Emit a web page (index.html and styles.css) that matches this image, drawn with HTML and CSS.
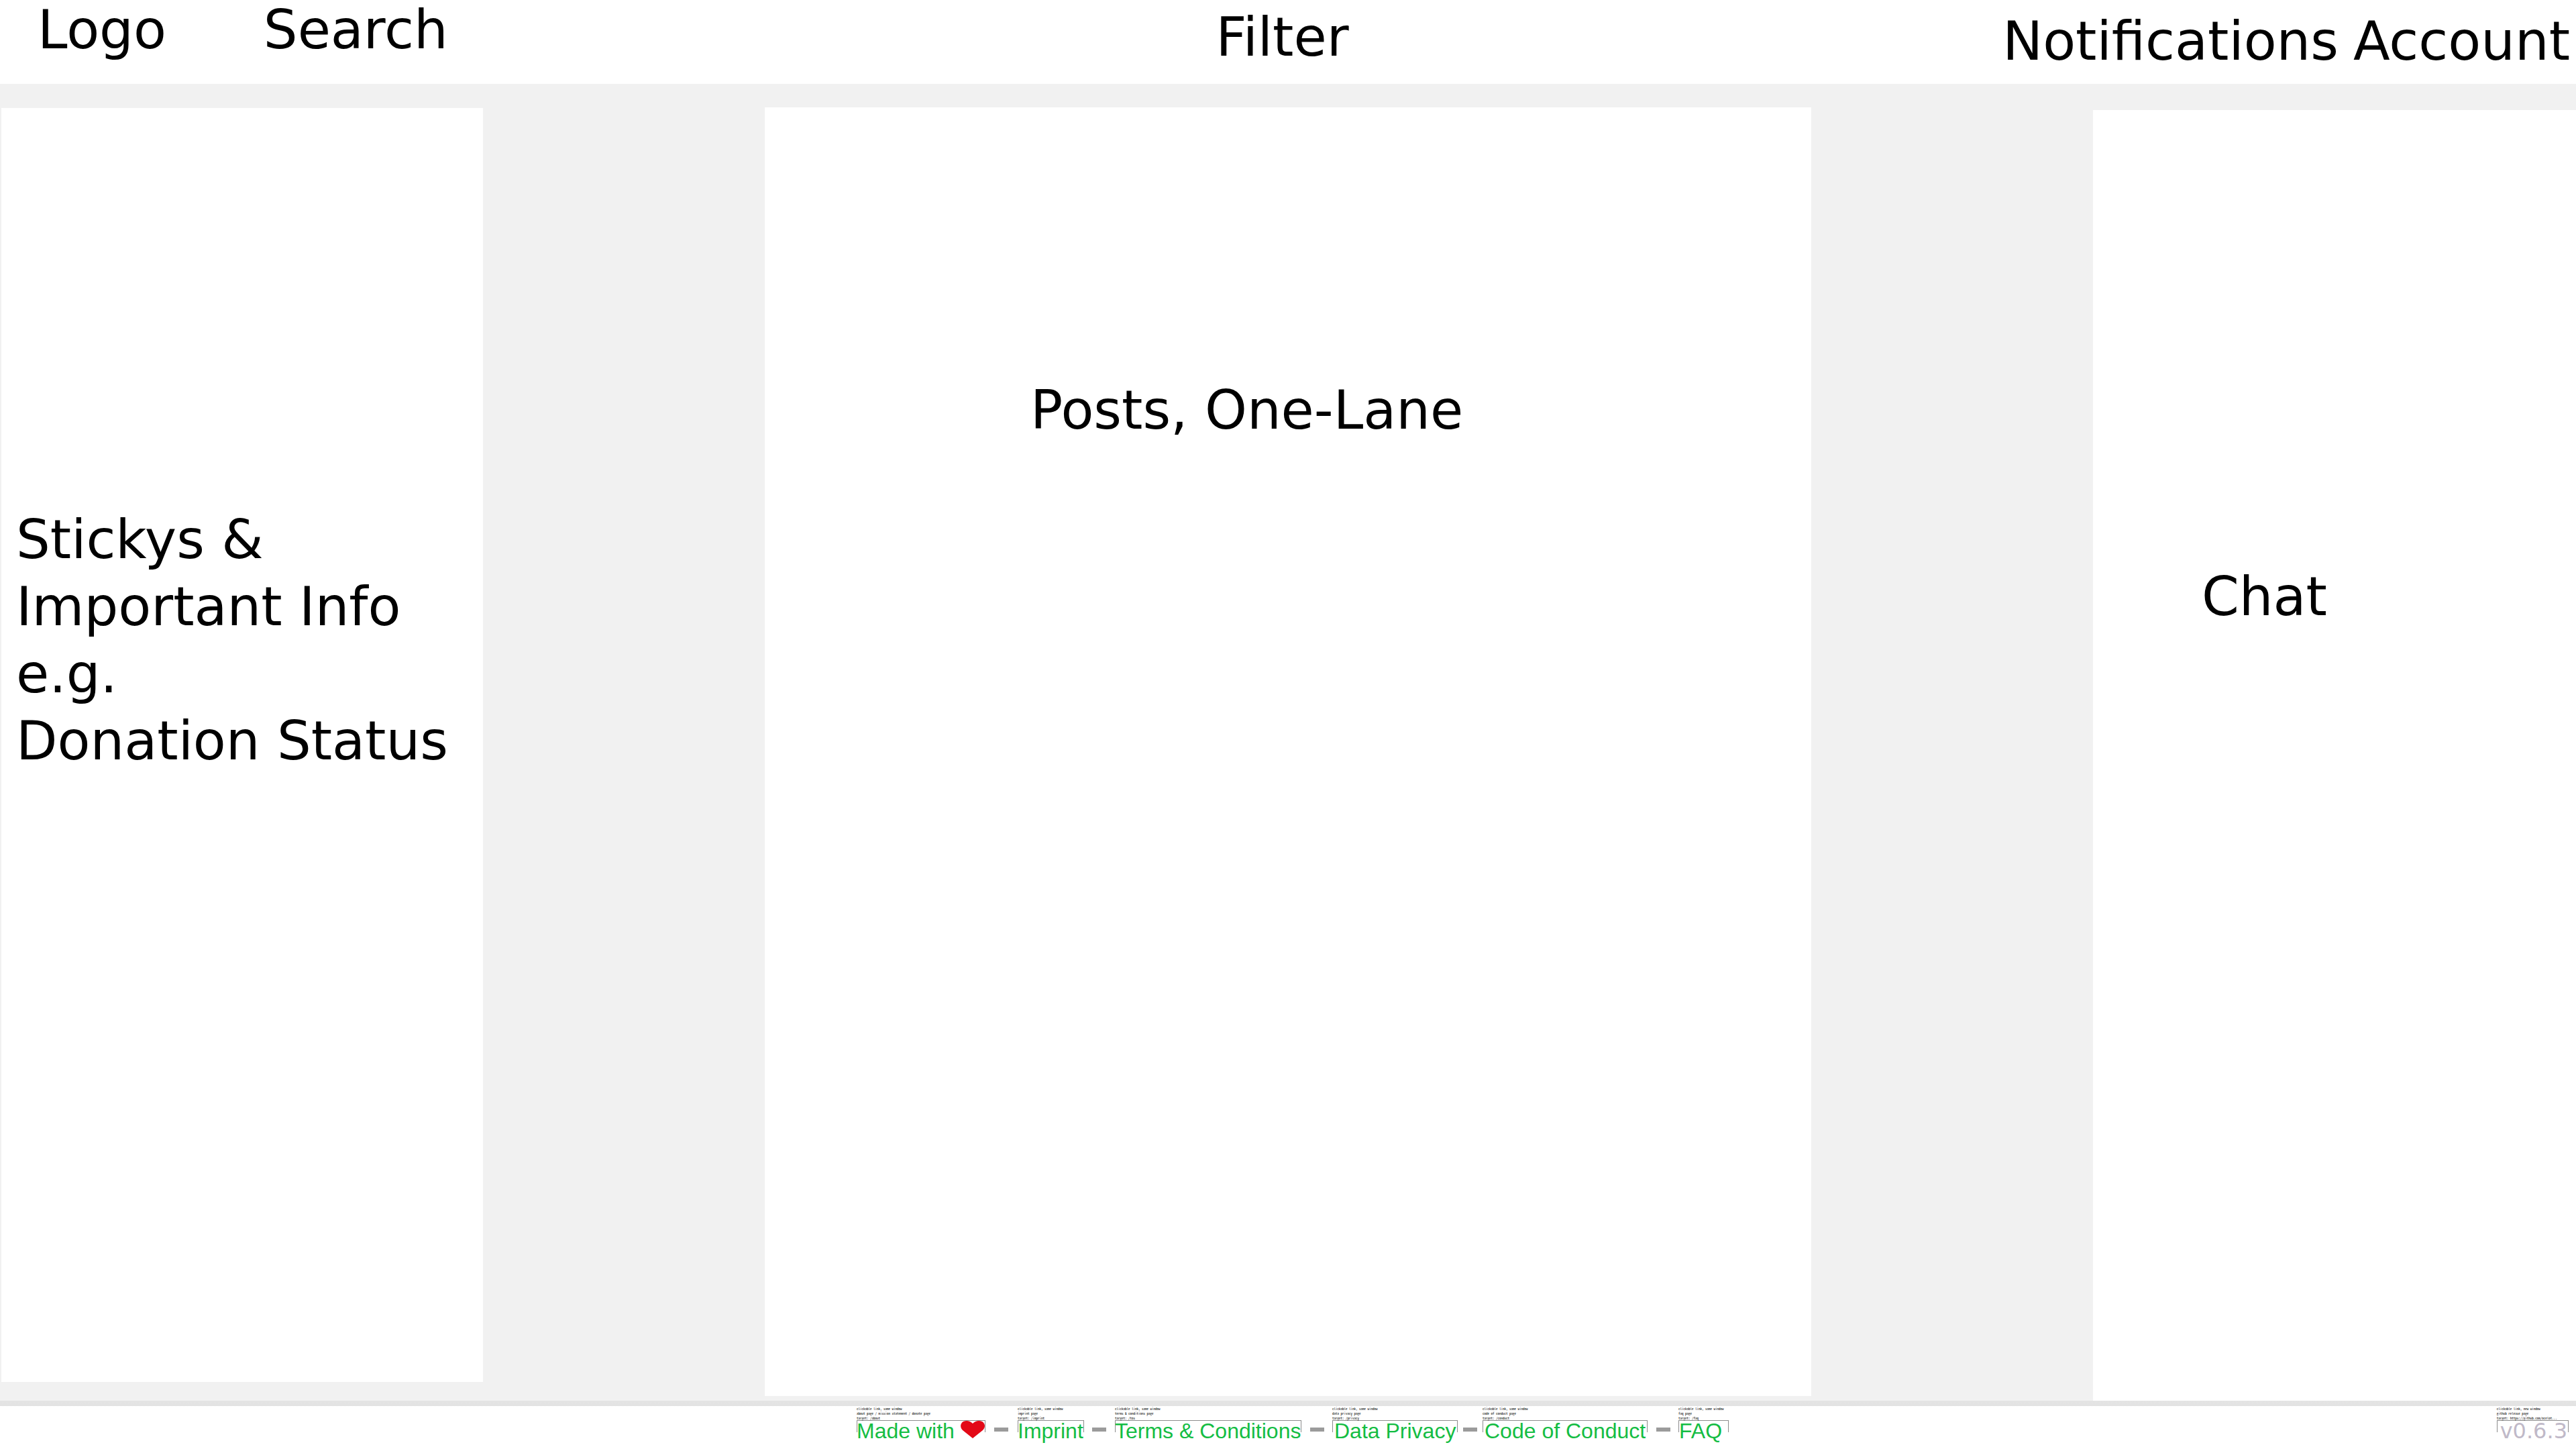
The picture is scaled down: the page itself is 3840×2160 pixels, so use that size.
FILE: index.html
```html
<!DOCTYPE html>
<html lang="en">
<head>
<meta charset="utf-8">
<title>One-Lane Layout</title>
<link rel="stylesheet" href="styles.css">
</head>
<body class="page">
  <header class="header">
    <div class="header-left">
      <span>Logo</span>
      <span>Search</span>
    </div>
    <div class="header-center">Filter</div>
    <div class="header-right">
      <span>Notifications</span>
      <span>Account</span>
    </div>
  </header>

  <main class="lanes">
    <aside class="panel panel-info">Stickys &amp;<br>Important Info<br>e.g.<br>Donation Status</aside>
    <section class="panel panel-posts">Posts, One-Lane</section>
    <aside class="panel panel-chat">Chat</aside>
  </main>

  <footer class="footer">
    <nav class="links">
      <div class="item">
        <p class="note">clickable link, same window<br>about page / mission statement / donate page<br>target: /about</p>
        <div class="row"><a class="link" href="/about">Made with <svg class="heart" viewBox="0 0 36 26" aria-hidden="true"><path d="M18 26 L3 14 C-1 10 -1 4 4 1 C9 -1 14 0 18 4 C22 0 27 -1 32 1 C37 4 37 10 33 14 Z"/></svg></a><span class="dash"></span></div>
      </div>
      <div class="item">
        <p class="note">clickable link, same window<br>imprint page<br>target: /imprint</p>
        <div class="row"><a class="link" href="/imprint">Imprint</a><span class="dash"></span></div>
      </div>
      <div class="item">
        <p class="note">clickable link, same window<br>terms &amp; conditions page<br>target: /tos</p>
        <div class="row"><a class="link" href="/tos">Terms &amp; Conditions</a><span class="dash"></span></div>
      </div>
      <div class="item">
        <p class="note">clickable link, same window<br>data privacy page<br>target: /privacy</p>
        <div class="row"><a class="link link-padded" href="/privacy">Data Privacy</a><span class="dash"></span></div>
      </div>
      <div class="item">
        <p class="note">clickable link, same window<br>code of conduct page<br>target: /conduct</p>
        <div class="row"><a class="link link-padded" href="/conduct">Code of Conduct</a><span class="dash"></span></div>
      </div>
      <div class="item">
        <p class="note">clickable link, same window<br>faq page<br>target: /faq</p>
        <div class="row"><a class="link link-last" href="/faq">FAQ</a></div>
      </div>
    </nav>
    <div class="release">
      <p class="note">clickable link, new window<br>github release page<br>target: https://github.com/ocelot...</p>
      <div class="row"><a class="link link-version" href="https://github.com/" target="_blank">v0.6.3</a></div>
    </div>
  </footer>
</body>
</html>
```
FILE: styles.css
```css
* {
  box-sizing: border-box;
}

.page {
  margin: 0;
  min-height: 100vh;
  display: flex;
  flex-direction: column;
  background: #f1f1f1;
  color: #000;
  font-family: "DejaVu Sans", sans-serif;
  font-size: 80px;
  line-height: 100px;
}

.header {
  display: grid;
  grid-template-columns: 1fr auto 1fr;
  min-height: 125px;
  padding: 0 9px 0 56px;
  background: #fff;
  line-height: 80px;
}

.header-left {
  display: flex;
  gap: 145px;
  padding-top: 5px;
}

.header-center {
  padding: 16px 64px 0 0;
}

.header-right {
  display: flex;
  justify-content: flex-end;
  gap: 22px;
  padding-top: 22px;
}

.lanes {
  flex: 1;
  display: grid;
  grid-template-columns: 18.75% 40.625% 18.75%;
  justify-content: space-between;
}

.panel {
  background: #fff;
}

.panel-info {
  margin: 36px 0 28px 2px;
  padding: 594px 0 0 22px;
}

.panel-posts {
  margin: 35px 0 7px;
  padding: 402px 0 0 396px;
}

.panel-chat {
  margin-top: 39px;
  padding: 676px 0 0 162px;
}

.footer {
  display: grid;
  grid-template-columns: 1fr auto 1fr;
  padding: 0 11px 11px 25px;
  border-top: 8px solid #dcdcdc;
  border-image: linear-gradient(#e4e4e4, #d6d6d6) 8;
  border-image-width: 8px 0 0;
  background: #fff;
}

.links {
  grid-column: 2;
  display: grid;
  grid-template-columns: 240px 145px 324px 224px 292px 75px;
}

.release {
  justify-self: end;
}

.note {
  margin: 0;
  color: #000;
  font-family: "Noto Sans Mono CJK SC", "Noto Sans Mono CJK JP", "DejaVu Sans Mono", monospace;
  font-size: 5px;
  line-height: 7px;
  white-space: nowrap;
}

.row {
  display: flex;
}

.link {
  position: relative;
  color: #14bd43;
  font-family: "Liberation Sans", Arial, sans-serif;
  font-size: 32px;
  line-height: 32px;
  padding-right: 1px;
  text-decoration: none;
  white-space: nowrap;
}

/* open-bottomed bracket that ties the note to its link */
.link::before {
  content: "";
  position: absolute;
  z-index: -1;
  inset: 0 0 auto;
  height: 17px;
  border: 1px solid #8c8c8c;
  border-bottom: 0;
}

.links,
.release {
  position: relative;
  z-index: 0;
}

.link-padded {
  padding: 0 3px;
}

.link-last {
  flex: 1;
  padding-left: 1px;
}

.link-version {
  padding: 0 2px 0 5px;
  color: #c0b9c8;
  font-family: "DejaVu Sans", sans-serif;
}

.heart {
  width: 36px;
  height: 26px;
  fill: #e30917;
}

.dash {
  width: 21px;
  height: 6px;
  margin: 11px auto 0;
  background: #9b9b9b;
}
```
